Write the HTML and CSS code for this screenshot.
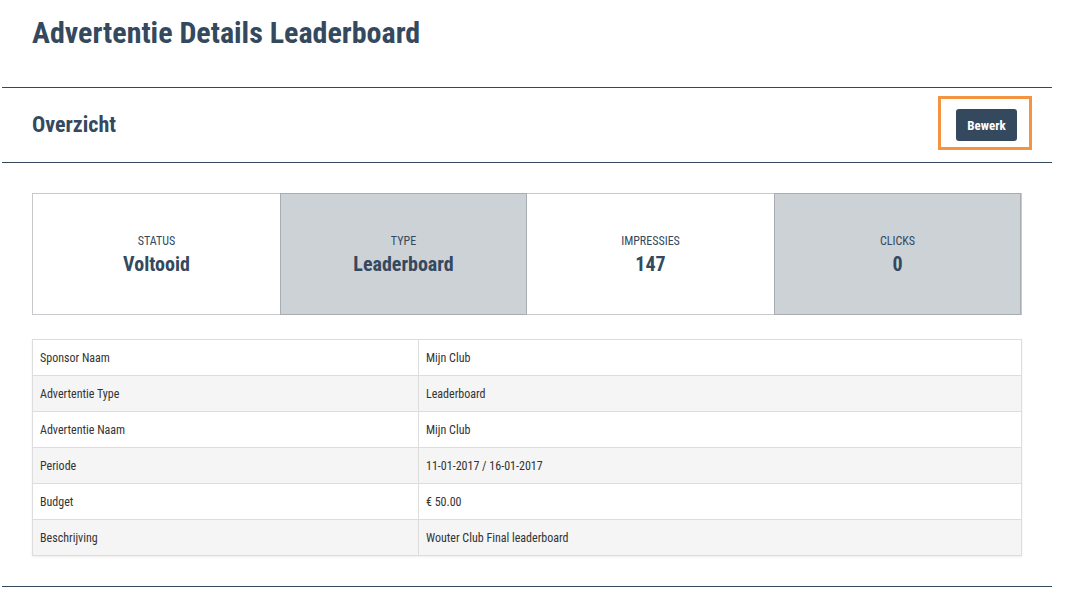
FILE: index.html
```html
<!DOCTYPE html>
<html>
<head>
<meta charset="utf-8">
<link rel="stylesheet" href="styles.css">
</head>
<body>
<div class="page">
  <h1 class="title">Advertentie Details Leaderboard</h1>
  <section class="panel">
    <div class="panel-head">
      <h2 class="panel-title">Overzicht</h2>
      <div class="highlight"><button class="btn">Bewerk</button></div>
    </div>
    <div class="panel-body">
      <div class="stats">
        <div class="stat"><div class="stat-label">STATUS</div><div class="stat-value">Voltooid</div></div>
        <div class="stat alt"><div class="stat-label">TYPE</div><div class="stat-value">Leaderboard</div></div>
        <div class="stat"><div class="stat-label">IMPRESSIES</div><div class="stat-value">147</div></div>
        <div class="stat alt"><div class="stat-label">CLICKS</div><div class="stat-value">0</div></div>
      </div>
      <table class="details">
        <tr><td>Sponsor Naam</td><td>Mijn Club</td></tr>
        <tr><td>Advertentie Type</td><td>Leaderboard</td></tr>
        <tr><td>Advertentie Naam</td><td>Mijn Club</td></tr>
        <tr><td>Periode</td><td>11-01-2017 / 16-01-2017</td></tr>
        <tr><td>Budget</td><td>€ 50.00</td></tr>
        <tr><td>Beschrijving</td><td>Wouter Club Final leaderboard</td></tr>
      </table>
    </div>
  </section>
</div>
</body>
</html>
```
FILE: styles.css
```css
* { box-sizing: border-box; }
html, body { margin: 0; padding: 0; background: #fff; }
body {
  font-family: "Roboto Condensed", Roboto, "Liberation Sans", sans-serif;
  font-stretch: condensed;
  color: #34495e;
}
.page { width: 1075px; padding: 0 23px 0 2px; }
.title {
  margin: 0;
  padding: 14px 0 0 30px;
  height: 87px;
  font-size: 30px;
  font-weight: 700;
  line-height: 38px;
  color: #34495e;
}
.panel { border-top: 1px solid #34495e; border-bottom: 1px solid #34495e; }
.panel-head {
  display: flex;
  align-items: center;
  justify-content: space-between;
  height: 75px;
  border-bottom: 1px solid #34495e;
  padding: 0 20px 0 30px;
}
.panel-title { margin: -2px 0 0 0; font-size: 22px; font-weight: 700; color: #34495e; }
.highlight {
  border: 3px solid #f39443;
  padding: 10px 12px 6px 15px;
  margin-top: -4px;
}
.btn {
  display: block;
  background: #34495e;
  color: #fff;
  border: 0;
  border-radius: 3px;
  width: 61px;
  height: 32px;
  font-family: inherit;
  font-weight: 700;
  font-size: 13px;
}
.panel-body { padding: 30px 30px 30px 30px; }
.stats {
  display: grid;
  grid-template-columns: repeat(4, 1fr);
  height: 122px;
  border: 1px solid #c7c9cc;
}
.stat {
  display: flex;
  flex-direction: column;
  align-items: center;
  justify-content: center;
  padding-top: 1px;
}
.stat.alt { background: #cdd2d7; border: 1px solid #a7adb3; margin: -1px 0; }
.stat-label { font-size: 12px; color: #34495e; line-height: 14px; }
.stat-value { font-size: 20px; font-weight: 700; margin-top: 4px; line-height: 24px; }
.details {
  width: 100%;
  margin-top: 24px;
  border-collapse: collapse;
  font-size: 12px;
  color: #333;
  box-shadow: 0 1px 2px rgba(0,0,0,0.08);
}
.details td {
  border: 1px solid #ddd;
  height: 36px;
  padding: 0 7px;
}
.details td:first-child { width: 386px; }
.details tr:nth-child(even) td { background: #f5f5f5; }
```
